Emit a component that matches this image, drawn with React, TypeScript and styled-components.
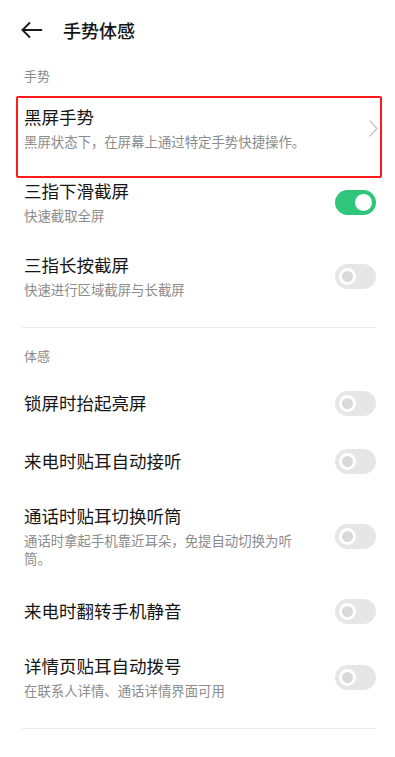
import React from "react";
import styled, { createGlobalStyle } from "styled-components";

const Global = createGlobalStyle`
  html, body { margin: 0; padding: 0; background: #ffffff; }
  body { font-family: "Noto Sans CJK SC", "Noto Sans", sans-serif; color: #1a1a1a; }
  * { box-sizing: border-box; }
`;

const Page = styled.div`
  width: 395px;
  min-height: 757px;
  background: #fff;
  display: flex;
  flex-direction: column;
`;

const Header = styled.header`
  height: 60px;
  display: flex;
  align-items: center;
  padding-left: 21px;
  gap: 20px;
`;

const BackButton = styled.button`
  border: none;
  background: none;
  padding: 0;
  width: 22px;
  height: 22px;
  display: flex;
  align-items: center;
  justify-content: center;
  color: #1a1a1a;
`;

const Title = styled.h1`
  margin: 0;
  font-size: 18px;
  font-weight: 500;
  line-height: 26px;
  color: #151515;
`;

const SectionLabel = styled.div<{ $below?: number }>`
  padding: 7px 24px ${(p) => p.$below ?? 6}px;
  font-size: 13px;
  line-height: 18px;
  color: #8a8a8a;
`;

const Divider = styled.hr`
  border: none;
  height: 1px;
  background: #ececec;
  margin: 14px 19px 12px 22px;
`;

const Row = styled.div<{ $highlight?: boolean }>`
  position: relative;
  min-height: 58px;
  padding: 15px 19px 15px 24px;
  display: flex;
  align-items: center;
  gap: 36px;
  ${(p) =>
    p.$highlight &&
    `
    &::after {
      content: "";
      position: absolute;
      left: 16px;
      right: 13px;
      top: 5px;
      bottom: -13px;
      border: 2.5px solid #ff1b1b;
      border-radius: 2px;
      pointer-events: none;
    }
  `}
`;

const Texts = styled.div`
  flex: 1;
  min-width: 0;
  display: flex;
  flex-direction: column;
`;

const ItemTitle = styled.div`
  font-size: 17.5px;
  line-height: 22px;
  color: #161616;
`;

const ItemSub = styled.div`
  margin-top: 4px;
  font-size: 13.4px;
  line-height: 18px;
  color: #8c8c8c;
`;

const Track = styled.div<{ $on?: boolean }>`
  flex: none;
  width: 41px;
  height: 25px;
  border-radius: 13px;
  background: ${(p) => (p.$on ? "#2fc67c" : "#e6e6e6")};
  display: flex;
  align-items: center;
  justify-content: ${(p) => (p.$on ? "flex-end" : "flex-start")};
  padding: 0 4px;
`;

const Knob = styled.div<{ $on?: boolean }>`
  width: 17px;
  height: 17px;
  border-radius: 50%;
  background: ${(p) => (p.$on ? "#ffffff" : "#d9d9d9")};
  border: ${(p) => (p.$on ? "none" : "3.5px solid #ffffff")};
`;

const ChevronBox = styled.div`
  flex: none;
  width: 12px;
  display: flex;
  justify-content: flex-end;
  margin-right: -2px;
`;

const Toggle = ({ on }: { on?: boolean }) => (
  <Track $on={on}>
    <Knob $on={on} />
  </Track>
);

type Item = { title: string; sub?: string; on?: boolean };

const gestures: Item[] = [
  { title: "三指下滑截屏", sub: "快速截取全屏", on: true },
  { title: "三指长按截屏", sub: "快速进行区域截屏与长截屏" },
];

const motion: Item[] = [
  { title: "锁屏时抬起亮屏" },
  { title: "来电时贴耳自动接听" },
  { title: "通话时贴耳切换听筒", sub: "通话时拿起手机靠近耳朵，免提自动切换为听筒。" },
  { title: "来电时翻转手机静音" },
  { title: "详情页贴耳自动拨号", sub: "在联系人详情、通话详情界面可用" },
];

const SettingRow = ({ item }: { item: Item }) => (
  <Row>
    <Texts>
      <ItemTitle>{item.title}</ItemTitle>
      {item.sub && <ItemSub>{item.sub}</ItemSub>}
    </Texts>
    <Toggle on={item.on} />
  </Row>
);

export default function App() {
  return (
    <Page>
      <Global />
      <Header>
        <BackButton aria-label="返回">
          <svg width="22" height="16" viewBox="0 0 22 16" fill="none">
            <path d="M1.5 8H20.5" stroke="#1a1a1a" strokeWidth="1.8" strokeLinecap="round" />
            <path d="M8.5 1L1.5 8L8.5 15" stroke="#1a1a1a" strokeWidth="1.8" strokeLinecap="round" strokeLinejoin="round" />
          </svg>
        </BackButton>
        <Title>手势体感</Title>
      </Header>

      <SectionLabel>手势</SectionLabel>
      <Row $highlight>
        <Texts>
          <ItemTitle>黑屏手势</ItemTitle>
          <ItemSub>黑屏状态下，在屏幕上通过特定手势快捷操作。</ItemSub>
        </Texts>
        <ChevronBox>
          <svg width="9" height="17" viewBox="0 0 9 17" fill="none">
            <path d="M1 1L8 8.5L1 16" stroke="#c6c6c6" strokeWidth="1.4" strokeLinecap="round" strokeLinejoin="round" />
          </svg>
        </ChevronBox>
      </Row>
      {gestures.map((g) => (
        <SettingRow key={g.title} item={g} />
      ))}

      <Divider />

      <SectionLabel $below={9}>体感</SectionLabel>
      {motion.map((m) => (
        <SettingRow key={m.title} item={m} />
      ))}
      <Divider />
    </Page>
  );
}
